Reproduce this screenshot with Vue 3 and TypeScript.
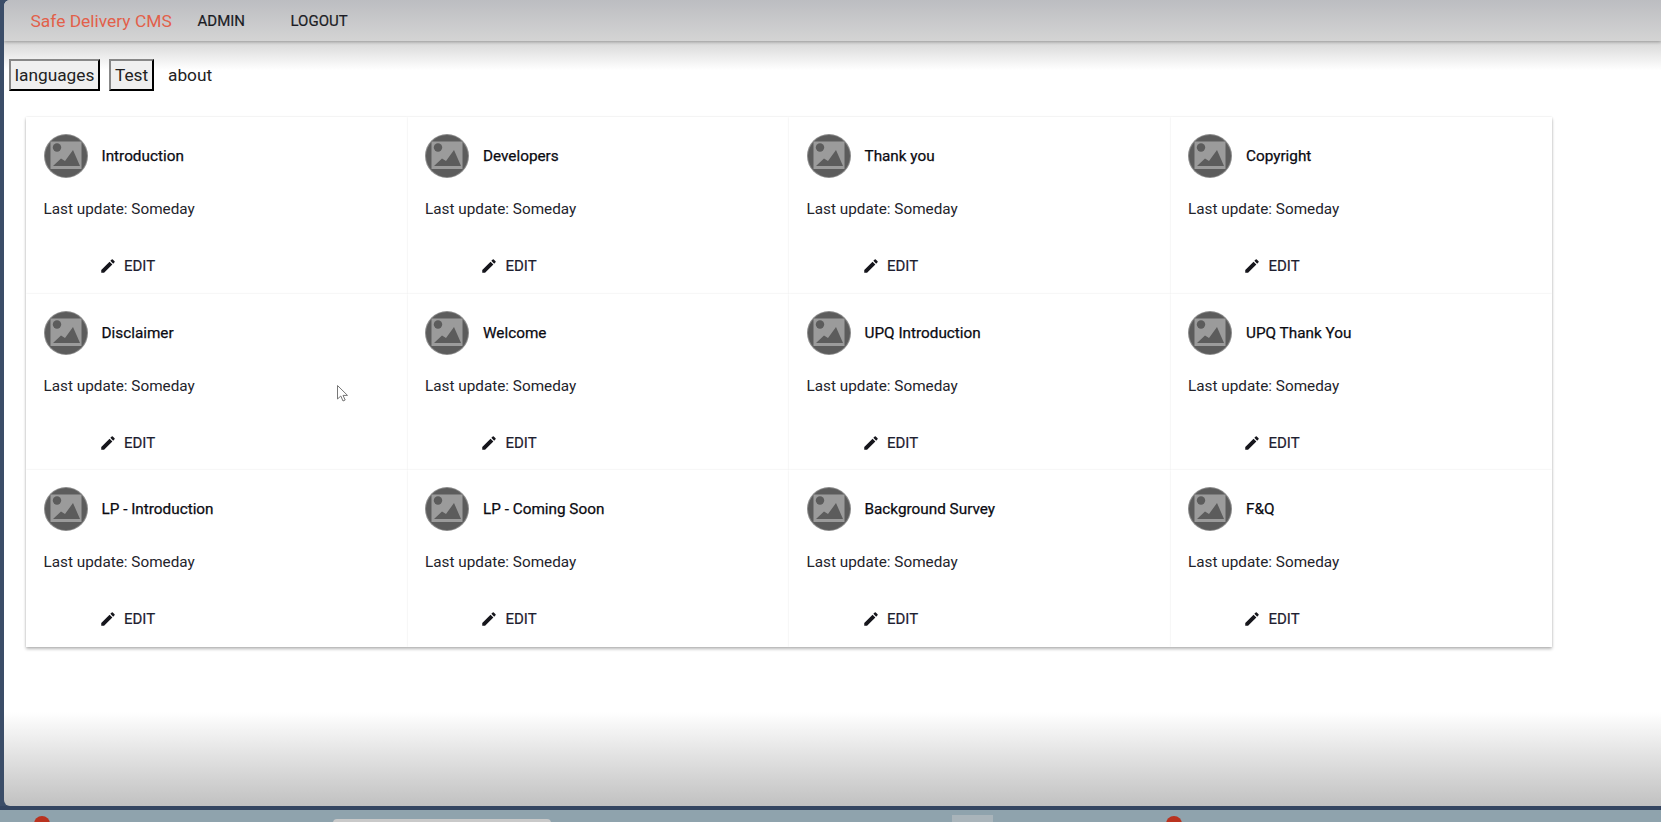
<template>
  <div class="screen">
    <div class="window">
      <header class="topbar">
        <span class="brand">Safe Delivery CMS</span>
        <a class="nav-link admin">ADMIN</a>
        <a class="nav-link">LOGOUT</a>
      </header>

      <div class="tabs">
        <button class="tab">languages</button>
        <button class="tab">Test</button>
        <span class="tab-plain">about</span>
      </div>

      <div class="grid">
        <div class="card" v-for="title in titles" :key="title">
          <div class="card-head">
            <svg class="avatar" viewBox="0 0 44 44">
              <circle cx="22" cy="22" r="22" fill="#8c8c8c" />
              <circle cx="22" cy="22" r="21" fill="#5c5c5c" />
              <rect x="6.5" y="7.5" width="31" height="27.5" fill="#9b9b9b" />
              <circle cx="13" cy="13.5" r="4.2" fill="#5c5c5c" />
              <path d="M9 32 L17 24.5 L21 27 L29 16 L36 32 Z" fill="#5c5c5c" />
            </svg>
            <span class="title">{{ title }}</span>
          </div>
          <div class="updated">Last update: Someday</div>
          <div class="actions">
            <svg class="pencil" viewBox="0 0 24 24">
              <path d="M3 17.25V21h3.75L17.81 9.94l-3.75-3.75L3 17.25zM20.71 7.04a1 1 0 0 0 0-1.41l-2.34-2.34a1 1 0 0 0-1.41 0l-1.83 1.83 3.75 3.75 1.83-1.83z" fill="#16161c" />
            </svg>
            <span class="edit">EDIT</span>
          </div>
        </div>
      </div>

      <svg class="cursor" viewBox="0 0 14 20">
        <path d="M1.5 1.5 V15 L4.8 12 L7 17 L9.2 16 L7 11.4 H11.5 Z" fill="#fff" stroke="#777" stroke-width="1" />
      </svg>
    </div>

    <div class="divider"></div>
    <footer class="taskbar">
      <span class="task-dot first"></span>
      <span class="task-pill"></span>
      <span class="task-tile"></span>
      <span class="task-dot second"></span>
    </footer>
  </div>
</template>

<script setup lang="ts">
const titles: string[] = [
  'Introduction',
  'Developers',
  'Thank you',
  'Copyright',
  'Disclaimer',
  'Welcome',
  'UPQ Introduction',
  'UPQ Thank You',
  'LP - Introduction',
  'LP - Coming Soon',
  'Background Survey',
  'F&Q',
]
</script>

<style>
html,
body {
  margin: 0;
  background: #3b4d68;
}
</style>

<style scoped>
.screen {
  width: 1661px;
  height: 822px;
  display: flex;
  flex-direction: column;
  overflow: hidden;
  background: #3b4d68;
  font-family: Roboto, "Liberation Sans", sans-serif;
}

.window {
  position: relative;
  flex: 1;
  min-height: 0;
  margin-left: 4px;
  border-radius: 6px 0 0 6px;
  overflow: hidden;
  background:
    linear-gradient(to bottom, rgba(255, 255, 255, 0) 712px, #c1c1c1 806px),
    linear-gradient(to bottom, #d8d8d8 42px, #ffffff 70px);
}

.topbar {
  height: 41px;
  display: flex;
  align-items: center;
  padding-left: 26.5px;
  background: linear-gradient(to bottom, #bcbdc1, #d4d4d4);
  box-shadow: 0 1px 3px rgba(0, 0, 0, 0.3);
}

.brand {
  width: 167px;
  font-size: 17.4px;
  color: #e2604a;
}

.nav-link {
  font-size: 15px;
  font-weight: 400;
  color: #1b1c24;
  -webkit-text-stroke: 0.2px #1b1c24;
}

.admin {
  width: 93px;
}

.tabs {
  display: flex;
  align-items: center;
  margin-top: 18px;
  padding-left: 5px;
  height: 32px;
}

.tab {
  height: 32px;
  margin-right: 9px;
  padding: 0 3.8px;
  border: 2px outset #222;
  border-color: #333 #111 #111 #333;
  background: #efefef;
  font-family: inherit;
  font-size: 17.3px;
  color: #222;
}

.tab-plain {
  margin-left: 5px;
  font-size: 17.3px;
  color: #222;
}

.grid {
  display: grid;
  grid-template-columns: repeat(4, 381.5px);
  grid-auto-rows: 176.6px;
  margin: 26px 0 0 22px;
  width: fit-content;
  box-shadow: 0 2px 3px rgba(0, 0, 0, 0.28);
}

.card {
  display: flex;
  flex-direction: column;
  padding: 17px 17px 0 17.5px;
  box-sizing: border-box;
  background: #fff;
  box-shadow: 0 0 2px rgba(0, 0, 0, 0.1);
}

.card-head {
  display: flex;
  align-items: center;
  height: 44px;
}

.avatar {
  width: 44px;
  height: 44px;
  flex: none;
}

.title {
  margin-left: 14px;
  font-size: 15.3px;
  font-weight: 400;
  color: #0b0b12;
  -webkit-text-stroke: 0.25px #0b0b12;
}

.updated {
  margin-top: 21px;
  font-size: 15.3px;
  line-height: 20px;
  color: #23232b;
}

.actions {
  display: flex;
  align-items: center;
  margin-top: 37px;
  padding-left: 55px;
  height: 20px;
}

.pencil {
  width: 18px;
  height: 18px;
}

.edit {
  margin-left: 7.5px;
  font-size: 15px;
  font-weight: 400;
  color: #1e2030;
  -webkit-text-stroke: 0.2px #1e2030;
}

.cursor {
  position: absolute;
  left: 332px;
  top: 384px;
  width: 14px;
  height: 20px;
}

.divider {
  flex: none;
  height: 4px;
  background: #344561;
}

.taskbar {
  position: relative;
  flex: none;
  height: 12px;
  background: #8fa3ad;
}

.task-dot {
  position: absolute;
  top: 6px;
  width: 16px;
  height: 16px;
  border-radius: 50%;
  background: #b9321f;
}

.first {
  left: 34px;
}

.second {
  left: 1166px;
}

.task-pill {
  position: absolute;
  top: 9px;
  left: 333px;
  width: 218px;
  height: 6px;
  border-radius: 4px 4px 0 0;
  background: #c9c9c9;
}

.task-tile {
  position: absolute;
  top: 5px;
  left: 952px;
  width: 41px;
  height: 10px;
  background: #a9b4ba;
}
</style>
